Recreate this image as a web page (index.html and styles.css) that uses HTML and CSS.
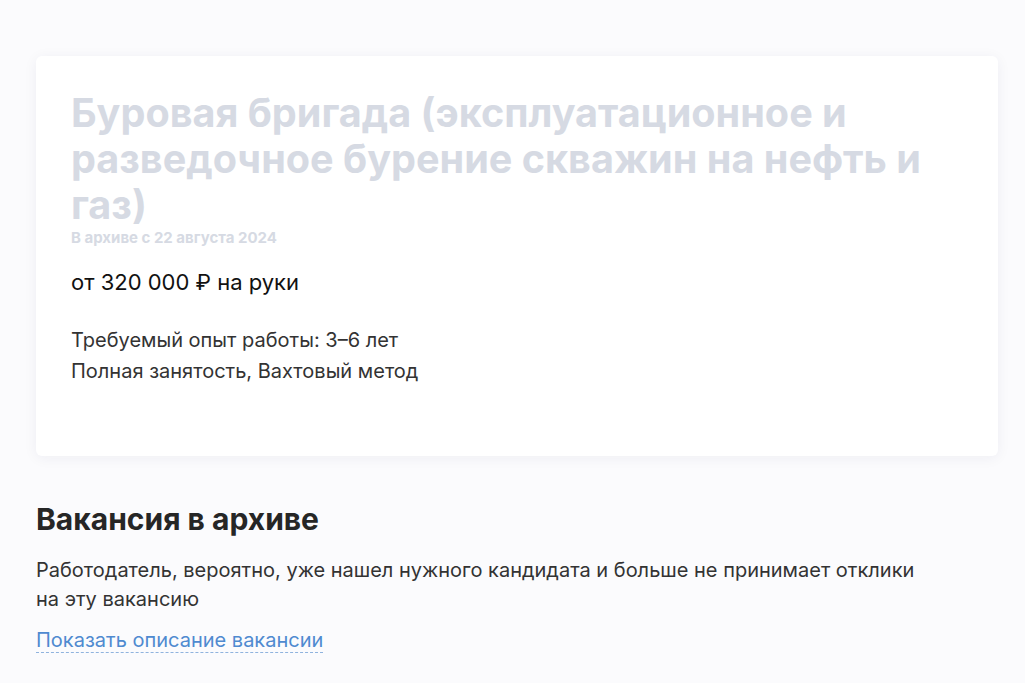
FILE: index.html
```html
<!DOCTYPE html>
<html lang="ru">
<head>
<meta charset="utf-8">
<link rel="stylesheet" href="styles.css">
</head>
<body>
<div class="page">
  <section class="card">
    <h1 class="title">Буровая бригада (эксплуатационное и разведочное бурение скважин на нефть и газ)</h1>
    <div class="archived">В архиве с 22 августа 2024</div>
    <div class="salary">от 320 000 ₽ на руки</div>
    <div class="details">
      <p>Требуемый опыт работы: 3–6 лет</p>
      <p>Полная занятость, Вахтовый метод</p>
    </div>
  </section>
  <section class="archive">
    <h2 class="archive-title">Вакансия в архиве</h2>
    <p class="archive-text">Работодатель, вероятно, уже нашел нужного кандидата и больше не принимает отклики на эту вакансию</p>
    <a class="archive-link" href="#">Показать описание вакансии</a>
  </section>
</div>
</body>
</html>
```

FILE: styles.css
```css
html, body {
  margin: 0;
  padding: 0;
  background: #fbfbfd;
}
body {
  font-family: Inter, "Noto Sans", "Liberation Sans", sans-serif;
  color: #222;
}
.page {
  padding: 56px 27px 0 36px;
}
.card {
  background: #ffffff;
  border-radius: 6px;
  box-shadow: 0 2px 14px rgba(30, 40, 80, 0.06);
  padding: 34px 35px 69px;
}
.title {
  margin: 0;
  font-size: 39.6px;
  line-height: 46px;
  font-weight: 700;
  color: #d6dae3;
}
.archived {
  margin-top: 2px;
  font-size: 15px;
  line-height: 15px;
  font-weight: 700;
  color: #d6dae3;
}
.salary {
  margin-top: 23px;
  font-size: 22px;
  line-height: 28px;
  color: #111;
}
.details {
  margin-top: 29px;
}
.details p {
  margin: 0;
  font-size: 20px;
  line-height: 31px;
  color: #333;
}
.archive {
  padding-top: 46px;
}
.archive-title {
  margin: 0;
  font-size: 30px;
  line-height: 34px;
  font-weight: 700;
  color: #262626;
}
.archive-text {
  margin: 20px 0 0;
  font-size: 20px;
  line-height: 29px;
  color: #333;
  max-width: 890px;
}
.archive-link {
  display: inline-block;
  margin-top: 14px;
  font-size: 20px;
  line-height: 24px;
  color: #4f8ad0;
  text-decoration: none;
  border-bottom: 1px dashed #8fb3de;
}
```
